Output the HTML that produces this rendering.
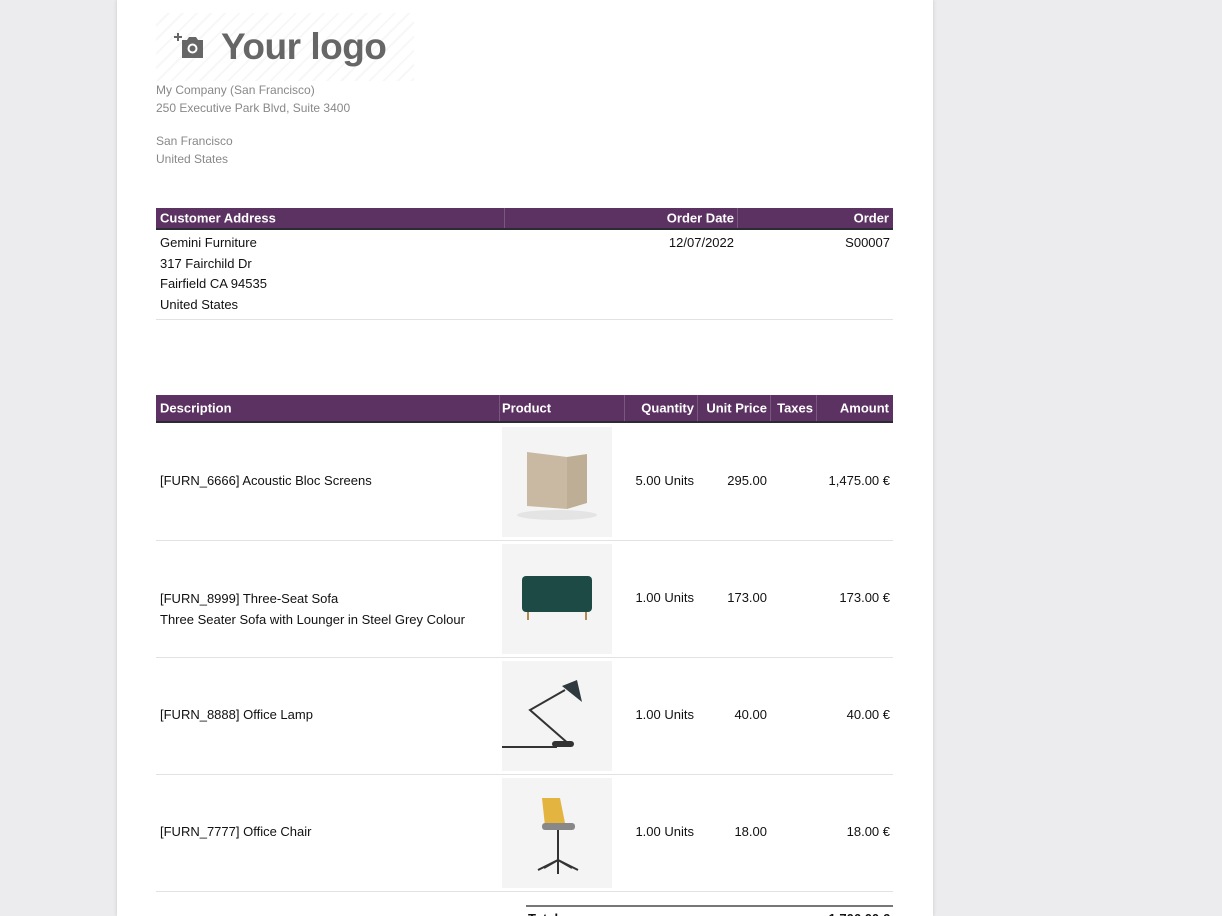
<!DOCTYPE html>
<html style="overflow:hidden;height:916px"><head><style>
body{margin:0;width:1222px;height:916px;background:#ececee;overflow:hidden;font-family:"Liberation Sans",sans-serif;position:relative}
.page{position:absolute;left:117px;top:0;width:816px;height:916px;background:#fff;box-shadow:0 0 4px rgba(0,0,0,.15)}
.a{position:absolute;white-space:nowrap}
.g{color:#888;font-size:12px}
.hd{position:absolute;left:156px;width:737px;background:#5c3262;border-bottom:2px solid #2b2b33;color:#fff;font-weight:bold;font-size:13px}
.hd span{position:absolute;top:50%;transform:translateY(-50%)}
.sep{position:absolute;top:0;bottom:0;width:1px;background:rgba(255,255,255,.18)}
.t{font-size:13px;color:#111}
.line{position:absolute;left:156px;width:737px;height:1px;background:#e2e2e6}
.img{position:absolute;left:502px;width:110px;height:110px;background:#f4f4f4}
</style></head><body>
<div class="page"></div>
<div class="a" style="left:156px;top:13px;width:258px;height:68px;background:repeating-linear-gradient(135deg,#fff 0 8px,#f7f7f7 8px 10px)"></div>
<svg class="a" style="left:174px;top:31px" width="34" height="30" viewBox="0 0 34 30"><path d="M3 2h2v3h3v2h-3v3h-2v-3h-3v-2h3z" fill="#666"/><path d="M8 9h5l2-3h7l2 3h5v18h-21z" fill="#666"/><circle cx="18.5" cy="17.5" r="5" fill="#fff"/><circle cx="18.5" cy="17.5" r="3" fill="#666"/></svg>
<div class="a" style="left:221px;top:26px;font-size:37px;font-weight:bold;color:#666;letter-spacing:-0.5px">Your logo</div>
<div class="a g" style="left:156px;top:83px">My Company (San Francisco)</div>
<div class="a g" style="left:156px;top:101px">250 Executive Park Blvd, Suite 3400</div>
<div class="a g" style="left:156px;top:134px">San Francisco</div>
<div class="a g" style="left:156px;top:152px">United States</div>

<div class="hd" style="top:208px;height:20px">
<span style="left:4px">Customer Address</span><div class="sep" style="left:348px"></div>
<span style="right:159px">Order Date</span><div class="sep" style="left:581px"></div>
<span style="right:4px">Order</span></div>
<div class="a t" style="left:160px;top:233px;line-height:20.5px">Gemini Furniture<br>317 Fairchild Dr<br>Fairfield CA 94535<br>United States</div>
<div class="a t" style="right:488px;top:235px">12/07/2022</div>
<div class="a t" style="right:332px;top:235px">S00007</div>
<div class="line" style="top:319px"></div>

<div class="hd" style="top:395px;height:26px">
<span style="left:4px">Description</span><div class="sep" style="left:343px"></div>
<span style="left:346px">Product</span><div class="sep" style="left:468px"></div>
<span style="right:199px">Quantity</span><div class="sep" style="left:541px"></div>
<span style="right:126px">Unit Price</span><div class="sep" style="left:614px"></div>
<span style="right:80px">Taxes</span><div class="sep" style="left:660px"></div>
<span style="right:4px">Amount</span></div>

<div class="img" style="top:427px"><svg width="110" height="110"><ellipse cx="55" cy="88" rx="40" ry="5" fill="#e4e4e4"/><path d="M25 25l40 5v52l-40-3z" fill="#c9b9a3"/><path d="M65 30l20-3v49l-20 6z" fill="#bfae96"/></svg></div>
<div class="a t" style="left:160px;top:473px">[FURN_6666] Acoustic Bloc Screens</div>
<div class="a t" style="right:528px;top:473px">5.00 Units</div>
<div class="a t" style="right:455px;top:473px">295.00</div>
<div class="a t" style="right:332px;top:473px">1,475.00 €</div>
<div class="line" style="top:540px"></div>

<div class="img" style="top:544px"><svg width="110" height="110"><rect x="20" y="32" width="70" height="36" rx="4" fill="#1e4a45"/><rect x="25" y="68" width="2" height="8" fill="#b08a50"/><rect x="83" y="68" width="2" height="8" fill="#b08a50"/></svg></div>
<div class="a t" style="left:160px;top:589px;line-height:20.5px">[FURN_8999] Three-Seat Sofa<br>Three Seater Sofa with Lounger in Steel Grey Colour</div>
<div class="a t" style="right:528px;top:590px">1.00 Units</div>
<div class="a t" style="right:455px;top:590px">173.00</div>
<div class="a t" style="right:332px;top:590px">173.00 €</div>
<div class="line" style="top:657px"></div>

<div class="img" style="top:661px"><svg width="110" height="110"><path d="M0 86h55M68 84l-40-35 35-20" stroke="#333" stroke-width="2" fill="none"/><path d="M60 25l15-6 5 22z" fill="#2e3a40"/><rect x="50" y="80" width="22" height="6" rx="3" fill="#333"/></svg></div>
<div class="a t" style="left:160px;top:707px">[FURN_8888] Office Lamp</div>
<div class="a t" style="right:528px;top:707px">1.00 Units</div>
<div class="a t" style="right:455px;top:707px">40.00</div>
<div class="a t" style="right:332px;top:707px">40.00 €</div>
<div class="line" style="top:774px"></div>

<div class="img" style="top:778px"><svg width="110" height="110"><path d="M40 20h18l5 25-20 3z" fill="#e3b540"/><rect x="40" y="45" width="33" height="7" rx="3" fill="#888"/><path d="M56 52v30M36 92l20-10 20 10M56 82v14M42 90l14-8 14 8" stroke="#333" stroke-width="2" fill="none"/></svg></div>
<div class="a t" style="left:160px;top:824px">[FURN_7777] Office Chair</div>
<div class="a t" style="right:528px;top:824px">1.00 Units</div>
<div class="a t" style="right:455px;top:824px">18.00</div>
<div class="a t" style="right:332px;top:824px">18.00 €</div>
<div class="line" style="top:891px"></div>

<div class="a" style="left:526px;top:905px;width:367px;height:2px;background:#777"></div>
<div style="position:absolute;left:0;top:908px;width:1222px;height:8px;overflow:hidden">
<div class="a t" style="left:528px;top:3px;font-weight:bold">Total</div>
<div class="a t" style="right:332px;top:3px;font-weight:bold">1,706.00 €</div>
</div>
</body></html>
